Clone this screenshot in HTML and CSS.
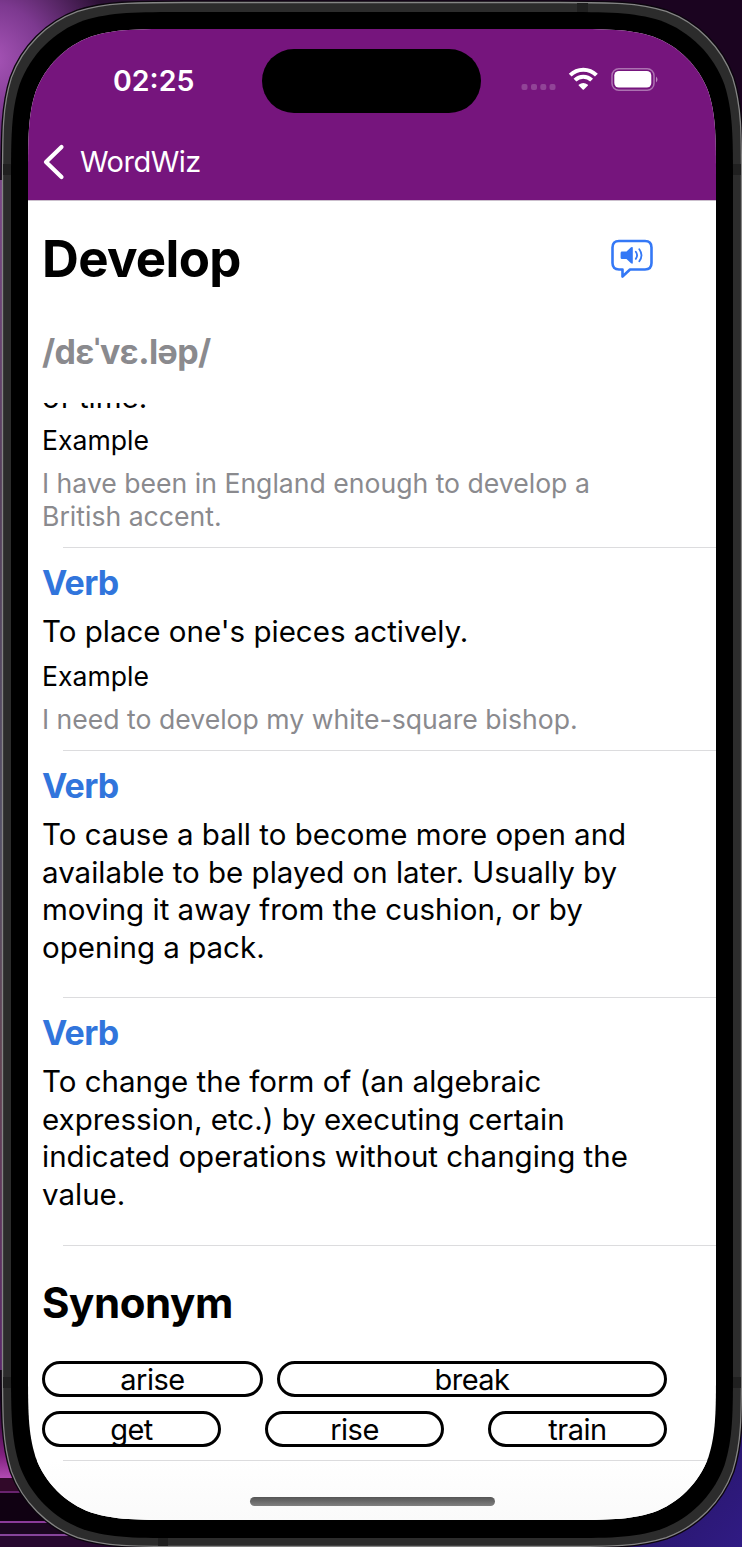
FILE: index.html
```html
<!DOCTYPE html>
<html lang="en">
<head>
<meta charset="utf-8">
<title>WordWiz</title>
<link rel="stylesheet" href="styles.css">
</head>
<body>
<svg class="backdrop" width="742" height="1547" viewBox="0 0 742 1547">
  <defs>
    <radialGradient id="glow" gradientUnits="userSpaceOnUse" cx="-10" cy="60" r="125"><stop offset="0" stop-color="#a855b8"/><stop offset=".45" stop-color="#7d3990"/><stop offset="1" stop-color="#2b1034"/></radialGradient>
    <linearGradient id="pink" x1="0" y1="0" x2="0" y2="1"><stop offset="0" stop-color="#1d0527"/><stop offset=".7" stop-color="#80207e"/><stop offset="1" stop-color="#b24bb2"/></linearGradient>
    <linearGradient id="blue" x1="0" y1="0" x2="1" y2="1"><stop offset="0" stop-color="#20104e"/><stop offset="1" stop-color="#301b84"/></linearGradient>
    <linearGradient id="edge" x1="0" y1="0" x2="0" y2="1"><stop offset="0" stop-color="#7d4789"/><stop offset=".25" stop-color="#57405d"/><stop offset=".55" stop-color="#565268"/><stop offset=".75" stop-color="#654454"/><stop offset="1" stop-color="#5c286c"/></linearGradient>
    <path id="outline" d="M2.500 184.400C2.500 132 2.500 105.800 11.400 77.600C22.600 46.900 46.900 22.600 77.600 11.400C105.800 2.500 132 2.500 184.400 2.500H559.600C612 2.500 638.200 2.500 666.400 11.400C697.100 22.600 721.400 46.900 732.600 77.600C741.500 105.800 741.500 132 741.500 184.400V1364.600C741.500 1417 741.500 1443.200 732.600 1471.400C721.400 1502.100 697.100 1526.400 666.400 1537.600C638.200 1546.500 612 1546.500 559.600 1546.500H184.400C132 1546.500 105.800 1546.500 77.600 1537.600C46.900 1526.400 22.600 1502.100 11.400 1471.400C2.500 1443.200 2.500 1417 2.500 1364.600Z"/>
  </defs>
  <rect width="742" height="1547" fill="#1b0420"/>
  <rect width="180" height="180" fill="url(#glow)"/>
  <rect y="1400" width="100" height="78" fill="url(#pink)"/>
  <rect y="1478" width="140" height="14" fill="#310929"/>
  <rect y="1491" width="140" height="2" fill="#69236f"/>
  <rect y="1493" width="140" height="28" fill="#100112"/>
  <rect y="1521" width="140" height="2" fill="#8b3b9a"/>
  <rect y="1523" width="140" height="12" fill="#1b0620"/>
  <rect y="1534" width="140" height="2" fill="#87449b"/>
  <rect y="1536" width="140" height="11" fill="#27082f"/>
  <rect x="600" y="1380" width="142" height="167" fill="url(#blue)"/>
  <use href="#outline" class="shell-dark"/>
  <rect y="180" width="2" height="1190" fill="url(#edge)"/>
  <use href="#outline" class="shell"/>
  <g fill="#202020"><path d="M3 164h8v11H3zM733 164h8v11h-8zM577 3h11v10h-11zM3 1377h8v11H3zM733 1377h8v11h-8zM158 1538h10v8h-10z"/></g>
  <path d="M11 187.800C11 137.200 11 111.900 19.600 84.600C30.400 54.900 53.900 31.400 83.600 20.600C110.900 12 136.200 12 186.800 12H557.200C607.800 12 633.100 12 660.400 20.600C690.100 31.400 713.600 54.900 724.400 84.600C733 111.900 733 137.200 733 187.800V1362.200C733 1412.800 733 1438.100 724.400 1465.400C713.600 1495.100 690.100 1518.600 660.400 1529.400C633.100 1538 607.800 1538 557.200 1538H186.800C136.200 1538 110.900 1538 83.600 1529.400C53.900 1518.600 30.400 1495.100 19.600 1465.400C11 1438.100 11 1412.800 11 1362.200Z"/>
</svg>

<main class="screen">
  <header class="top">
    <div class="status">
      <span class="time">02:25</span>
      <span class="island"></span>
      <svg class="indicators" width="140" height="28" viewBox="0 0 140 28">
        <g fill="#fff" opacity=".2"><rect x="1.500" y="17" width="6" height="6" rx="2"/><rect x="11" y="17" width="6" height="6" rx="2"/><rect x="20.300" y="17" width="6" height="6" rx="2"/><rect x="29.500" y="17" width="6" height="6" rx="2"/></g>
        <g fill="none" stroke="#fff" stroke-width="4"><path d="M50.200 8.100a18.500 18.500 0 0 1 26.200 0M55 13.200a11.700 11.700 0 0 1 16.600 0"/></g>
        <path fill="#fff" d="M58.700 17.700q4.600-3.600 9.200 0q.4.500 0 .9l-4 4q-.6.500-1.200 0l-4-4q-.4-.4 0-.9z"/>
        <rect x="92" y="1.700" width="42" height="21.500" rx="6.800" fill="none" stroke="#fff" stroke-opacity=".4" stroke-width="1.500"/>
        <rect x="94.300" y="4" width="37" height="16.500" rx="4.500" fill="#fff"/>
        <path fill="#fff" fill-opacity=".5" d="M136 9.500q3 3 0 6z"/>
      </svg>
    </div>
    <nav class="nav">
      <svg width="22" height="36" viewBox="0 0 22 36"><path d="M18.500 3L3 18L18.500 33" fill="none" stroke="#fff" stroke-width="4.200" stroke-linecap="round" stroke-linejoin="round"/></svg>
      <span class="back">WordWiz</span>
    </nav>
  </header>

  <section class="word">
    <div class="word-row">
      <h1>Develop</h1>
      <svg class="speak" width="44" height="42" viewBox="0 0 44 42">
        <path d="M9 3H35Q41.500 3 41.500 9.500V25Q41.500 31.500 35 31.500H20L12.500 38.500V31.500H9Q2.500 31.500 2.500 25V9.500Q2.500 3 9 3Z" fill="none" stroke="#3478f6" stroke-width="2.600" stroke-linejoin="round"/>
        <path d="M12 13.500h4.500l4.500-4.200q1.800-1 1.800.5v15q0 1.500-1.800.5l-4.500-4.200H12q-1.400 0-1.400-1.400v-4.800q0-1.400 1.400-1.400Z" fill="#3478f6"/>
        <path d="M25.800 13.700q2.600 3.600 0 7.200M29.300 11.300q4.400 6 0 12" fill="none" stroke="#3478f6" stroke-width="1.800" stroke-linecap="round"/>
      </svg>
    </div>
    <p class="ipa">/dɛˈvɛ.ləp/</p>
  </section>

  <div class="list">
    <article class="entry first">
      <p class="meaning">of time.</p>
      <p class="label">Example</p>
      <p class="sample">I have been in England enough to develop a<br>British accent.</p>
    </article>
    <article class="entry second">
      <h2>Verb</h2>
      <p class="meaning">To place one's pieces actively.</p>
      <p class="label">Example</p>
      <p class="sample">I need to develop my white-square bishop.</p>
    </article>
    <article class="entry third">
      <h2>Verb</h2>
      <p class="meaning">To cause a ball to become more open and<br>available to be played on later. Usually by<br>moving it away from the cushion, or by<br>opening a pack.</p>
    </article>
    <article class="entry fourth">
      <h2>Verb</h2>
      <p class="meaning">To change the form of (an algebraic<br>expression, etc.) by executing certain<br>indicated operations without changing the<br>value.</p>
    </article>
    <section class="entry synonyms">
      <h3>Synonym</h3>
      <div class="chips wide"><span class="chip">arise</span><span class="chip">break</span></div>
      <div class="chips"><span class="chip">get</span><span class="chip">rise</span><span class="chip">train</span></div>
    </section>
  </div>
  <footer class="home"><span class="home-bar"></span></footer>
</main>
</body>
</html>
```
FILE: styles.css
```css
* { box-sizing: border-box; }
body {
  margin: 0;
  width: 742px;
  height: 1547px;
  overflow: hidden;
  padding: 29px 26px 27px 28px;
  background: #1b0420;
  font-family: Inter, "Liberation Sans", sans-serif;
  color: #000;
}
h1, h2, h3, p { margin: 0; white-space: nowrap; }

.backdrop { position: absolute; left: 0; top: 0; z-index: -1; }
.shell-dark { fill: none; stroke: #0c060e; stroke-width: 4; }
.shell { fill: #2c2c2c; stroke: #858585; stroke-width: 1.300; }

/* Screen outline with continuous corners */
.screen {
  width: 688px;
  height: 1491px;
  display: flex;
  flex-direction: column;
  background: #fff;
  overflow: hidden;
  clip-path: path("M0 152.900C0 108.800 0 86.800 7.500 63.100C16.900 37.300 37.300 16.900 63.100 7.500C86.800 0 108.800 0 152.900 0H535.100C579.200 0 601.200 0 624.900 7.500C650.700 16.900 671.100 37.300 680.500 63.100C688 86.800 688 108.800 688 152.900V1338.100C688 1382.200 688 1404.200 680.500 1427.900C671.100 1453.700 650.700 1474.100 624.900 1483.500C601.200 1491 579.200 1491 535.100 1491H152.900C108.800 1491 86.800 1491 63.100 1483.500C37.300 1474.100 16.900 1453.700 7.500 1427.900C0 1404.200 0 1382.200 0 1338.100Z");
}

.top {
  flex: none;
  height: 172px;
  background: #76157d;
  border-bottom: 1px solid #cbbfcd;
  color: #fff;
}
.status { display: flex; height: 104px; padding-top: 20px; }
.time {
  width: 150px;
  margin: 12px 0 0 85px;
  font-size: 28.500px;
  line-height: 40px;
  font-weight: 600;
}
.island { width: 219px; height: 64px; border-radius: 32px; background: #000; margin-left: -1px; }
.indicators { margin: 18px 0 0 39px; }
.nav { display: flex; align-items: center; gap: 15px; height: 58px; padding-left: 15px; }
.back { font-size: 29px; line-height: 40px; letter-spacing: -0.500px; }

.word { flex: none; height: 202px; padding: 27px 62px 0 14px; }
.word-row { display: flex; justify-content: space-between; height: 62px; }
h1 { font-size: 51px; line-height: 62px; font-weight: 700; letter-spacing: -0.700px; }
.speak { margin-top: 10px; }
.ipa {
  margin-top: 41px;
  font-size: 34px;
  line-height: 42px;
  font-weight: 700;
  letter-spacing: -0.600px;
  color: #8a8a8e;
}

.list { flex: none; height: 1058px; overflow: hidden; }
.entry { position: relative; padding: 14px 14px 0; }
.entry::after {
  content: "";
  position: absolute;
  left: 35px;
  right: 0;
  bottom: 0;
  height: 1px;
  background: #dcdcde;
}
.first { margin-top: -24px; padding-top: 0; height: 169px; }
.second { height: 203px; }
.third { height: 247px; }
.fourth { height: 248px; }
.synonyms { height: 215px; padding-top: 31px; }
h2 { font-size: 34px; line-height: 42px; font-weight: 700; letter-spacing: -0.700px; color: #3175dc; }
.meaning { font-size: 29.500px; line-height: 37.500px; }
h2 + .meaning { margin-top: 9px; }
.label { margin-top: 9px; font-size: 26.600px; line-height: 33px; }
.first .label { margin-top: 7px; }
.sample { margin-top: 10px; font-size: 26.600px; line-height: 33px; color: #8a8a8e; }
h3 { font-size: 42px; line-height: 52px; font-weight: 700; letter-spacing: -0.400px; }

.chips { display: flex; justify-content: space-between; width: 625px; margin-top: 14px; }
.wide { margin-top: 32px; }
.chip {
  width: 179px;
  height: 36px;
  border: 3.500px solid #000;
  border-radius: 18px;
  text-align: center;
  font-size: 29px;
  line-height: 31px;
  letter-spacing: -0.500px;
}
.wide .chip:first-child { width: 221px; }
.wide .chip:last-child { width: 390px; }

.home {
  flex: 1;
  display: flex;
  justify-content: center;
  padding-top: 36px;
  background: linear-gradient(#fff, #fafafa);
}
.home-bar { width: 245px; height: 9px; border-radius: 5px; background: linear-gradient(#555, #808080); }
```
